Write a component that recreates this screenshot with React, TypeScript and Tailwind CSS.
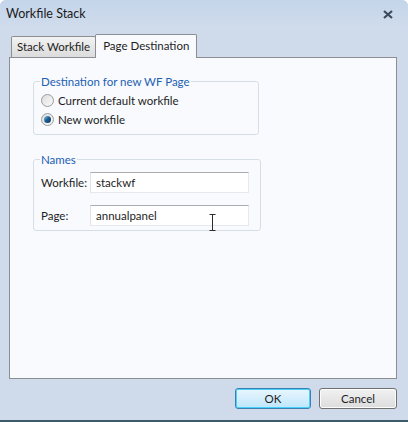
import React from 'react';

function Radio({ checked, label }: { checked?: boolean; label: string }) {
  return (
    <label className="flex items-center gap-[4px] h-[19px]">
      <span className="w-[13px] h-[13px] rounded-full border border-[#9a9b9c] bg-gradient-to-br from-[#dcdcdc] to-[#fbfbfb] flex items-center justify-center">
        {checked && (
          <span className="w-[7px] h-[7px] rounded-full bg-gradient-to-br from-[#7fc3f0] via-[#1c5a8c] to-[#0f3a66]" />
        )}
      </span>
      <span>{label}</span>
    </label>
  );
}

function Field({ label, value }: { label: string; value: string }) {
  return (
    <div className="flex items-center h-[21px]">
      <span className="w-[49px]">{label}</span>
      <div className="w-[159px] h-[21px] bg-white border border-[#e3e9ef] border-t-[#abadb3] border-l-[#e2e3ea] px-[5px] flex items-center">
        {value}
      </div>
    </div>
  );
}

export default function App() {
  return (
    <div
      className="w-[408px] h-[422px] bg-[#cfdbea] flex flex-col text-[11.5px] text-[#1e1e1e] border-b-[2px] border-[#3d5b6a] rounded-t-[6px] overflow-hidden"
      style={{ fontFamily: 'Lato, "Liberation Sans", Arial, sans-serif' }}
    >
      {/* title bar */}
      <div className="h-[29px] flex items-center justify-between pl-[6px] pr-[15px] bg-gradient-to-b from-[#c4d5ea] to-[#d0dcec]">
        <span className="text-[12.5px] text-[#1b1b1b]">Workfile Stack</span>
        <svg width="10" height="9" viewBox="0 0 10 9">
          <path d="M1 1 L9 8 M9 1 L1 8" stroke="#3c4b5e" strokeWidth="2.2" />
        </svg>
      </div>

      <div className="flex-1 flex flex-col px-[9px] pr-[11px]">
        {/* tabs */}
        <div className="flex items-end h-[28px] pl-[2px] relative z-10">
          <div className="h-[21px] px-[5px] flex items-center border border-b-0 border-[#8c8e94] bg-gradient-to-b from-[#f2f2f2] to-[#dcdcdc] rounded-t-[2px]">
            Stack Workfile
          </div>
          <div className="h-[24px] -mb-[1px] px-[7px] pt-[1px] flex items-start leading-[20px] border border-b-0 border-[#8c8e94] bg-[#f8fafd] rounded-t-[2px] -ml-[1px]">
            Page Destination
          </div>
        </div>

        {/* panel */}
        <div className="h-[322px] bg-[#f8fafd] border border-[#8c8e94] pt-[15px] pl-[23px]">
          <fieldset className="w-[226px] h-[62px] border border-[#d5dfe5] rounded-[3px] pl-[7px] pt-[1px]">
            <legend className="text-[#1d5fb4] px-[1px] -ml-[1px]">Destination for new WF Page</legend>
            <Radio label="Current default workfile" />
            <Radio checked label="New workfile" />
          </fieldset>

          <fieldset className="mt-[16px] w-[228px] h-[80px] border border-[#d5dfe5] rounded-[3px] pl-[7px] pt-[4px] flex flex-col gap-[12px]">
            <legend className="text-[#1d5fb4] px-[1px] -ml-[1px]">Names</legend>
            <Field label="Workfile:" value="stackwf" />
            <div className="relative">
              <Field label="Page:" value="annualpanel" />
              <svg className="absolute left-[168px] top-[9px]" width="7" height="17" viewBox="0 0 7 17">
                <path d="M0.5 0.5 H6.5 M3.5 0.5 V16.5 M0.5 16.5 H6.5" stroke="#2b2b2b" strokeWidth="1" />
              </svg>
            </div>
          </fieldset>
        </div>

        {/* buttons */}
        <div className="flex justify-end gap-[8px] pt-[9px]">
          <button className="w-[76px] h-[21px] rounded-[3px] border border-[#3c7fb1] bg-gradient-to-b from-[#eaf6fd] to-[#bee6fd] shadow-[inset_0_0_0_1px_#48d2fb]">
            OK
          </button>
          <button className="w-[78px] h-[21px] rounded-[3px] border border-[#707070] bg-gradient-to-b from-[#f2f2f2] to-[#dcdcdc] shadow-[inset_0_0_0_1px_#fcfcfc]">
            Cancel
          </button>
        </div>
      </div>
    </div>
  );
}
